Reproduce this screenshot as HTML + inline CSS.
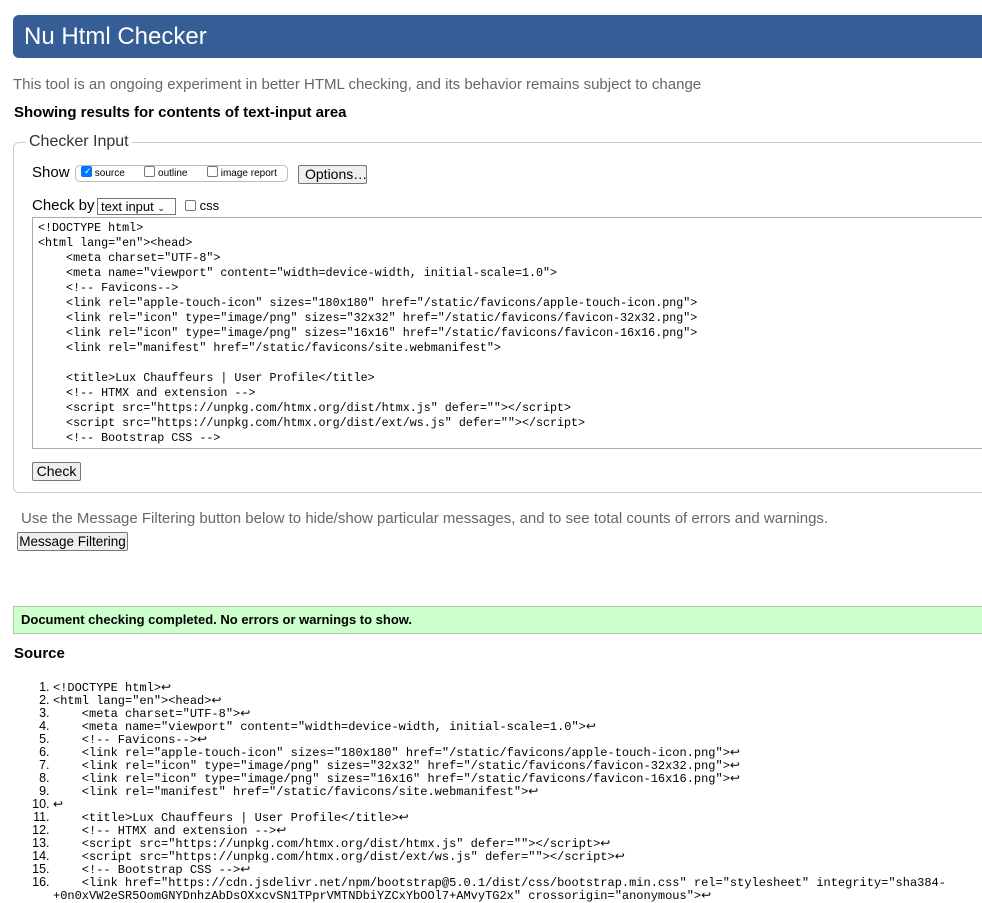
<!DOCTYPE html>
<html><head><style>
body{margin:0;background:#fff;font-family:"Liberation Sans",Arial,sans-serif;color:#000;width:982px;height:903px;overflow:hidden;position:relative}
.hdr{position:absolute;left:13px;top:15px;width:975px;height:43px;background:#365d95;border-radius:6px 0 0 6px;color:#fff;font-size:24px;line-height:43px;padding-left:11px;box-sizing:border-box}
.abs{position:absolute;white-space:nowrap}
fieldset{position:absolute;left:13px;top:133px;width:990px;height:360px;border:1px solid #ccc;border-radius:6px;margin:0;padding:0;box-sizing:border-box}
legend{font-size:16px;color:#333;margin-left:12px;padding:0 3px}
.btn{position:absolute;border:1px solid #767676;background:#efefef;font-size:14px;border-radius:2px;height:19px;line-height:17px;box-sizing:border-box;padding:0 6px;white-space:nowrap;text-align:center}
.cb{display:inline-block;width:11px;height:11px;border:1px solid #767676;border-radius:2px;vertical-align:-1px;box-sizing:border-box;background:#fff}
.ta{position:absolute;left:32px;top:217px;width:960px;height:232px;border:1px solid #aaa;box-sizing:border-box;font-family:"Liberation Mono",monospace;font-size:11.7px;line-height:15px;padding:3px 5px;white-space:pre;overflow:hidden}
.ok{position:absolute;left:13px;top:606px;width:980px;height:28px;background:#ccffcc;border:1px solid #aaccaa;box-sizing:border-box;font-size:13px;font-weight:bold;line-height:26px;padding-left:7px}
ol{position:absolute;left:0;top:681px;margin:0;padding:0 0 0 53px;font-family:"Liberation Mono",monospace;font-size:12px;line-height:13px}
ol li{padding-left:0;white-space:pre;height:13px;line-height:13px}
ol li:last-child{height:auto}
ol li::marker{font-family:"Liberation Sans",sans-serif;font-size:12.5px}
</style></head><body>
<div class="hdr">Nu Html Checker</div>
<div class="abs" style="left:13px;top:76px;font-size:15px;color:#666">This tool is an ongoing experiment in better HTML checking, and its behavior remains subject to change</div>
<div class="abs" style="left:14px;top:104px;font-size:15px;font-weight:bold">Showing results for contents of text-input area</div>
<fieldset><legend>Checker Input</legend></fieldset>
<div class="abs" style="left:32px;top:164px;font-size:15px">Show</div>
<div class="abs" style="left:75px;top:165px;width:213px;height:17px;border:1px solid #bbb;border-radius:5px;font-size:10px;line-height:16px;padding-left:5px;box-sizing:border-box"><span class="cb" style="background:#0075ff;border-color:#0075ff;position:relative"><span style="position:absolute;left:2px;top:0;color:#fff;font-size:9px;line-height:9px">✓</span></span> source &nbsp; &nbsp; &nbsp; <span class="cb"></span> outline &nbsp; &nbsp; &nbsp; <span class="cb"></span> image report</div>
<div class="btn" style="left:298px;top:165px;width:69px">Options…</div>
<div class="abs" style="left:32px;top:197px;font-size:15px">Check by</div>
<div class="abs" style="left:97px;top:198px;width:79px;height:17px;border:1px solid #767676;font-size:13px;line-height:15px;padding-left:3px;box-sizing:border-box">text input <span style="font-size:9px">⌄</span></div>
<div class="abs" style="left:185px;top:198px;font-size:13px"><span class="cb"></span> css</div>
<div class="ta">&lt;!DOCTYPE html&gt;
&lt;html lang="en"&gt;&lt;head&gt;
    &lt;meta charset="UTF-8"&gt;
    &lt;meta name="viewport" content="width=device-width, initial-scale=1.0"&gt;
    &lt;!-- Favicons--&gt;
    &lt;link rel="apple-touch-icon" sizes="180x180" href="/static/favicons/apple-touch-icon.png"&gt;
    &lt;link rel="icon" type="image/png" sizes="32x32" href="/static/favicons/favicon-32x32.png"&gt;
    &lt;link rel="icon" type="image/png" sizes="16x16" href="/static/favicons/favicon-16x16.png"&gt;
    &lt;link rel="manifest" href="/static/favicons/site.webmanifest"&gt;

    &lt;title&gt;Lux Chauffeurs | User Profile&lt;/title&gt;
    &lt;!-- HTMX and extension --&gt;
    &lt;script src="https://unpkg.com/htmx.org/dist/htmx.js" defer=""&gt;&lt;/script&gt;
    &lt;script src="https://unpkg.com/htmx.org/dist/ext/ws.js" defer=""&gt;&lt;/script&gt;
    &lt;!-- Bootstrap CSS --&gt;</div>
<div class="btn" style="left:32px;top:462px;width:49px;padding:0">Check</div>
<div class="abs" style="left:21px;top:510px;font-size:15px;color:#666">Use the Message Filtering button below to hide/show particular messages, and to see total counts of errors and warnings.</div>
<div class="btn" style="left:17px;top:532px;width:111px;height:19px;padding:0;font-size:13.5px">Message Filtering</div>
<div class="ok">Document checking completed. No errors or warnings to show.</div>
<div class="abs" style="left:14px;top:645px;font-size:15px;font-weight:bold">Source</div>
<ol><li>&lt;!DOCTYPE html&gt;↩</li><li>&lt;html lang="en"&gt;&lt;head&gt;↩</li><li>    &lt;meta charset="UTF-8"&gt;↩</li><li>    &lt;meta name="viewport" content="width=device-width, initial-scale=1.0"&gt;↩</li><li>    &lt;!-- Favicons--&gt;↩</li><li>    &lt;link rel="apple-touch-icon" sizes="180x180" href="/static/favicons/apple-touch-icon.png"&gt;↩</li><li>    &lt;link rel="icon" type="image/png" sizes="32x32" href="/static/favicons/favicon-32x32.png"&gt;↩</li><li>    &lt;link rel="icon" type="image/png" sizes="16x16" href="/static/favicons/favicon-16x16.png"&gt;↩</li><li>    &lt;link rel="manifest" href="/static/favicons/site.webmanifest"&gt;↩</li><li>↩</li><li>    &lt;title&gt;Lux Chauffeurs | User Profile&lt;/title&gt;↩</li><li>    &lt;!-- HTMX and extension --&gt;↩</li><li>    &lt;script src="https://unpkg.com/htmx.org/dist/htmx.js" defer=""&gt;&lt;/script&gt;↩</li><li>    &lt;script src="https://unpkg.com/htmx.org/dist/ext/ws.js" defer=""&gt;&lt;/script&gt;↩</li><li>    &lt;!-- Bootstrap CSS --&gt;↩</li><li>    &lt;link href="https://cdn.jsdelivr.net/npm/bootstrap@5.0.1/dist/css/bootstrap.min.css" rel="stylesheet" integrity="sha384-
+0n0xVW2eSR5OomGNYDnhzAbDsOXxcvSN1TPprVMTNDbiYZCxYbOOl7+AMvyTG2x" crossorigin="anonymous"&gt;↩</li></ol>
</body></html>
